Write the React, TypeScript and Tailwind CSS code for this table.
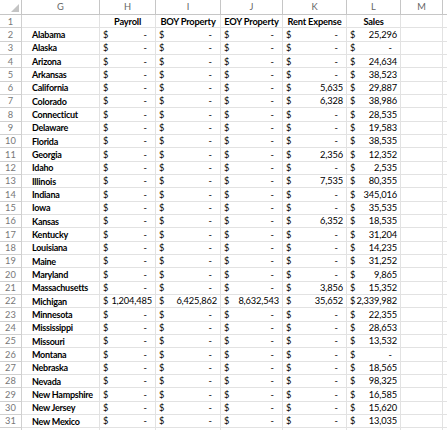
import React from 'react'

type Row = { state: string; payroll?: string; boy?: string; eoy?: string; rent?: string; sales: string }

const rows: Row[] = [
  { state: 'Alabama', sales: '25,296' },
  { state: 'Alaska', sales: '-' },
  { state: 'Arizona', sales: '24,634' },
  { state: 'Arkansas', sales: '38,523' },
  { state: 'California', rent: '5,635', sales: '29,887' },
  { state: 'Colorado', rent: '6,328', sales: '38,986' },
  { state: 'Connecticut', sales: '28,535' },
  { state: 'Delaware', sales: '19,583' },
  { state: 'Florida', sales: '38,535' },
  { state: 'Georgia', rent: '2,356', sales: '12,352' },
  { state: 'Idaho', sales: '2,535' },
  { state: 'Illinois', rent: '7,535', sales: '80,355' },
  { state: 'Indiana', sales: '345,016' },
  { state: 'Iowa', sales: '35,535' },
  { state: 'Kansas', rent: '6,352', sales: '18,535' },
  { state: 'Kentucky', sales: '31,204' },
  { state: 'Louisiana', sales: '14,235' },
  { state: 'Maine', sales: '31,252' },
  { state: 'Maryland', sales: '9,865' },
  { state: 'Massachusetts', rent: '3,856', sales: '15,352' },
  { state: 'Michigan', payroll: '1,204,485', boy: '6,425,862', eoy: '8,632,543', rent: '35,652', sales: '2,339,982' },
  { state: 'Minnesota', sales: '22,355' },
  { state: 'Mississippi', sales: '28,653' },
  { state: 'Missouri', sales: '13,532' },
  { state: 'Montana', sales: '-' },
  { state: 'Nebraska', sales: '18,565' },
  { state: 'Nevada', sales: '98,325' },
  { state: 'New Hampshire', sales: '16,585' },
  { state: 'New Jersey', sales: '15,620' },
  { state: 'New Mexico', sales: '13,035' },
]

const cols = 'grid grid-cols-[22px_78px_56px_65px_62px_64px_54px_42px_1fr]'
const cell = 'border-r border-b border-[#e2e2e2] h-[13.33px] flex items-center overflow-hidden whitespace-nowrap'

function Money({ value }: { value?: string }) {
  const v = value ?? '-'
  return (
    <div className={`${cell} justify-between pl-[3px]`}>
      <span>$</span>
      <span className={v === '-' ? 'pr-[8px]' : 'pr-[3px] tracking-[-0.15px]'}>{v}</span>
    </div>
  )
}

function RowNum({ n }: { n?: number }) {
  return (
    <div className="h-[13.33px] border-r border-b border-[#d0d0d0] flex items-center justify-center text-[#777] bg-white">
      {n}
    </div>
  )
}

export default function App() {
  return (
    <div
      className="w-[447px] h-[430px] overflow-hidden bg-white text-[9.3px] leading-none text-black"
      style={{ fontFamily: 'Lato, "Liberation Sans", sans-serif' }}
    >
      <div className={`${cols} h-[15px] text-[#666]`}>
        <div className="relative border-r border-b border-[#c6c6c6]">
          <div className="absolute right-[2px] bottom-[2px] w-0 h-0 border-l-[8px] border-l-transparent border-b-[8px] border-b-[#c4c4c4]" />
        </div>
        {['G', 'H', 'I', 'J', 'K', 'L', 'M'].map((c) => (
          <div key={c} className="border-r border-b border-[#c6c6c6] flex items-center justify-center">
            {c}
          </div>
        ))}
        <div className="border-b border-[#c6c6c6]" />
      </div>

      <div className={cols}>
        <RowNum n={1} />
        <div className={cell} />
        {['Payroll', 'BOY Property', 'EOY Property', 'Rent Expense', 'Sales'].map((h) => (
          <div key={h} className={`${cell} justify-center font-bold tracking-[-0.2px]`}>
            {h}
          </div>
        ))}
        <div className={cell} />
        <div className="border-b border-[#e2e2e2]" />
      </div>

      {rows.map((r, i) => (
        <div key={r.state} className={cols}>
          <RowNum n={i + 2} />
          <div className={`${cell} pl-[10px] font-bold text-[9px] tracking-[-0.25px]`}>{r.state}</div>
          <Money value={r.payroll} />
          <Money value={r.boy} />
          <Money value={r.eoy} />
          <Money value={r.rent} />
          <Money value={r.sales} />
          <div className={cell} />
          <div className="border-b border-[#e2e2e2]" />
        </div>
      ))}

      <div className={cols}>
        <RowNum />
        <div className={cell} />
        <div className={cell} />
        <div className={cell} />
        <div className={cell} />
        <div className={cell} />
        <div className={cell} />
        <div className={cell} />
        <div />
      </div>
    </div>
  )
}
